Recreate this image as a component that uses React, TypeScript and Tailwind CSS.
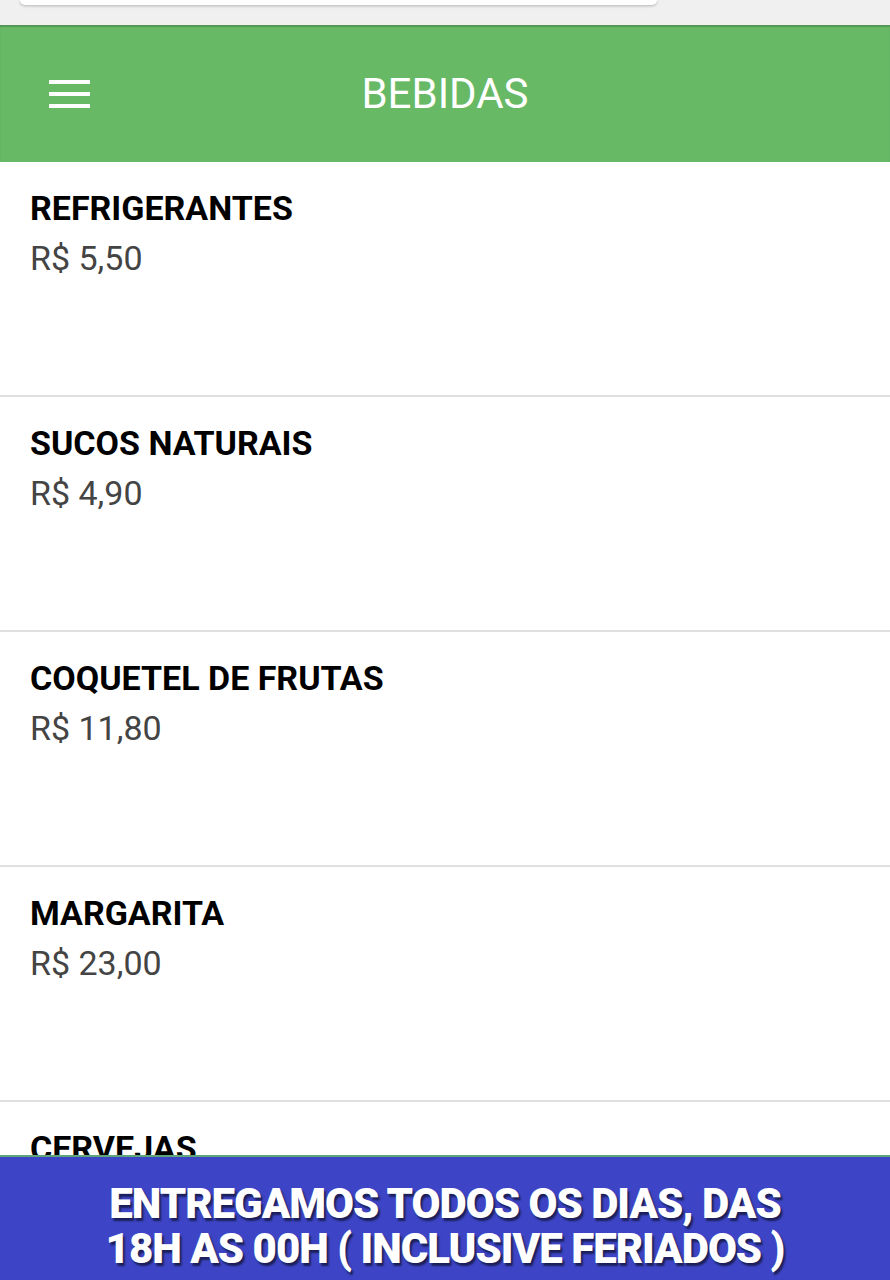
import React from "react";

interface Item {
  name: string;
  price: string;
}

const items: Item[] = [
  { name: "REFRIGERANTES", price: "R$ 5,50" },
  { name: "SUCOS NATURAIS", price: "R$ 4,90" },
  { name: "COQUETEL DE FRUTAS", price: "R$ 11,80" },
  { name: "MARGARITA", price: "R$ 23,00" },
  { name: "CERVEJAS", price: "R$ 8,00" },
];

const ItemRow: React.FC<{ item: Item }> = ({ item }) => (
  <div className="h-[235px] shrink-0 border-b-2 border-[#e0e0e0] bg-white px-[30px] pt-[27px]">
    <h3 className="text-[34px] font-bold leading-[38px] text-black">{item.name}</h3>
    <p className="mt-[12px] text-[34px] leading-[38px] text-[#444]">{item.price}</p>
  </div>
);

const App: React.FC = () => {
  return (
    <div
      className="relative h-[1280px] w-[890px] overflow-hidden bg-white"
      style={{ fontFamily: "Roboto, 'Noto Sans', sans-serif" }}
    >
      {/* barra de cima */}
      <div className="h-[25px] bg-[#f0f0f0] px-[20px]">
        <div className="h-[5px] w-[637px] rounded-b-[6px] bg-white shadow-[0_1px_3px_rgba(0,0,0,0.25)]" />
      </div>

      {/* cabeçalho */}
      <header className="relative flex h-[137px] items-center bg-[#67b966] shadow-[inset_0_2px_1px_rgba(0,0,0,0.18)]">
        <div className="ml-[49px] flex w-[41px] flex-col gap-[8px]">
          <span className="h-[4px] bg-white" />
          <span className="h-[4px] bg-white" />
          <span className="h-[4px] bg-white" />
        </div>
        <h1 className="absolute left-0 right-0 text-center text-[42px] font-normal text-white">
          BEBIDAS
        </h1>
      </header>

      {/* lista */}
      <div className="flex flex-col">
        {items.map((item) => (
          <ItemRow key={item.name} item={item} />
        ))}
      </div>

      {/* banner */}
      <div className="absolute bottom-0 left-0 right-0 h-[125px] border-t-[2px] border-[#5fa57a] bg-[#3d45c6]">
        <div
          className="flex h-full flex-col items-center justify-center pt-[14px] text-[42px] font-black uppercase leading-[45px] tracking-[-1px] text-white"
          style={{ textShadow: "2px 3px 2px rgba(0,0,0,0.55)" }}
        >
          <span>ENTREGAMOS TODOS OS DIAS, DAS</span>
          <span>18H AS 00H ( INCLUSIVE FERIADOS )</span>
        </div>
      </div>
    </div>
  );
};

export default App;
